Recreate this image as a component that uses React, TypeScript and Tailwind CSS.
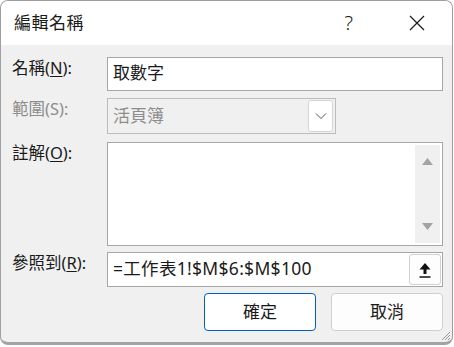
import React from 'react'

const FONT = { fontFamily: '"Noto Sans", "Noto Sans CJK TC", sans-serif' }

function Label({ children, dim }: { children: React.ReactNode; dim?: boolean }) {
  return (
    <div className={`w-[95px] shrink-0 text-[16.5px] leading-[22px] ${dim ? 'text-[#8d8d8d]' : 'text-[#1a1a1a]'}`}>
      {children}
    </div>
  )
}

export default function App() {
  return (
    <div className="w-[454px] h-[347px] bg-white overflow-hidden" style={FONT}>
      <div className="w-[453px] h-[345px] rounded-[8px] border border-[#9f9f9f] border-b-[3px] border-b-[#a3a3a3] bg-[#f0f0f0] overflow-hidden flex flex-col relative">
        {/* Title bar */}
        <div className="h-[44px] bg-white flex items-center pl-[13px] shrink-0">
          <span className="text-[17px] text-[#1a1a1a] tracking-[0.5px]">編輯名稱</span>
          <span className="ml-auto mr-[56px] text-[20px] text-[#1a1a1a] font-light">?</span>
          <svg width="16" height="16" viewBox="0 0 16 16" className="mr-[27px]">
            <path d="M1 1 L15 15 M15 1 L1 15" stroke="#1a1a1a" strokeWidth="1.2" />
          </svg>
        </div>

        {/* Body */}
        <div className="flex flex-col pl-[11px] pr-[9px] pt-[12px]">
          {/* Name */}
          <div className="flex h-[34px]">
            <Label>名稱(<span className="underline underline-offset-2">N</span>):</Label>
            <div className="flex-1 bg-white border border-[#a6a6a6] pl-[5px] pt-[2px] text-[17px] leading-[26px] text-[#1a1a1a]">
              取數字
            </div>
          </div>

          {/* Scope */}
          <div className="flex h-[36px] mt-[7px]">
            <Label dim>範圍(S):</Label>
            <div className="w-[229px] border border-[#bcbcbc] flex items-center pl-[5px] pr-[2px]">
              <span className="text-[17px] text-[#8d8d8d] flex-1">活頁簿</span>
              <div className="w-[25px] h-[32px] bg-white border border-[#d5d5d5] rounded-[3px] flex items-center justify-center">
                <svg width="12" height="8" viewBox="0 0 12 8">
                  <path d="M1 1.5 L6 6.5 L11 1.5" fill="none" stroke="#555" strokeWidth="1" />
                </svg>
              </div>
            </div>
          </div>

          {/* Comment */}
          <div className="flex h-[104px] mt-[8px]">
            <Label>註解(<span className="underline underline-offset-2">O</span>):</Label>
            <div className="flex-1 bg-white border border-[#a6a6a6] flex justify-end p-[2px]">
              <div className="w-[25px] bg-[#f0f0f0] flex flex-col items-center justify-between py-[13px]">
                <svg width="11" height="7" viewBox="0 0 11 7">
                  <path d="M5.5 0 L11 7 L0 7 Z" fill="#a3a3a3" />
                </svg>
                <svg width="11" height="7" viewBox="0 0 11 7">
                  <path d="M0 0 L11 0 L5.5 7 Z" fill="#a3a3a3" />
                </svg>
              </div>
            </div>
          </div>

          {/* Refers to */}
          <div className="flex h-[35px] mt-[6px]">
            <Label>參照到(<span className="underline underline-offset-2">R</span>):</Label>
            <div className="flex-1 bg-white border border-[#a6a6a6] flex items-stretch">
              <div className="flex-1 pl-[5px] pt-[1px] text-[17.5px] leading-[28px] tracking-[0.3px] text-[#1a1a1a]">=工作表1!$M$6:$M$100</div>
              <div className="w-[32px] m-[1px] bg-[#fdfdfd] border border-[#d0d0d0] rounded-[3px] flex items-center justify-center">
                <svg width="14" height="18" viewBox="0 0 14 18">
                  <path d="M7 2 L12.5 8.5 L8.5 8.5 L8.5 13 L5.5 13 L5.5 8.5 L1.5 8.5 Z" fill="#111" />
                  <path d="M1.5 16 L12.5 16" stroke="#111" strokeWidth="1.3" />
                </svg>
              </div>
            </div>
          </div>

          {/* Buttons */}
          <div className="flex justify-end gap-[15px] mt-[6px]">
            <button className="w-[112px] h-[38px] bg-white border border-[#005fb8] rounded-[4px] text-[17px] text-[#1a1a1a]">
              確定
            </button>
            <button className="w-[112px] h-[38px] bg-[#fdfdfd] border border-[#d0d0d0] rounded-[4px] text-[17px] text-[#1a1a1a]">
              取消
            </button>
          </div>
        </div>

        {/* Size grip */}
        <svg width="12" height="12" viewBox="0 0 12 12" className="absolute right-[1px] bottom-[1px]">
          <path d="M11 3 L3 11 M11 6 L6 11 M11 9 L9 11" stroke="#9a9a9a" strokeWidth="1" />
        </svg>
      </div>
    </div>
  )
}
